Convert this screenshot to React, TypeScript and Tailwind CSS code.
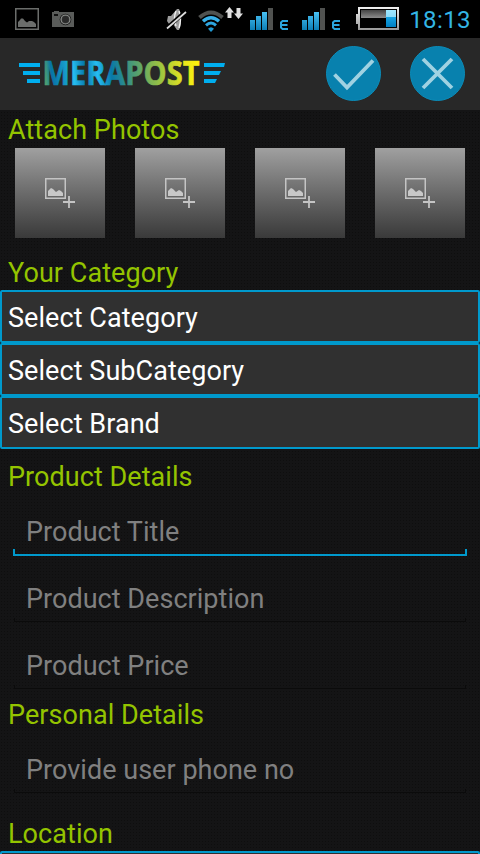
import type { ReactNode } from "react";

interface FieldProps {
  placeholder: string;
  focused?: boolean;
}

function PictureIcon() {
  return (
    <svg className="absolute left-[15px] top-2" width="24" height="22" viewBox="0 0 24 22">
      <rect x="0.75" y="0.75" width="22.5" height="20.5" fill="none" stroke="#6b6d6b" strokeWidth="1.5" />
      <path d="M3 19v-5l2-2 1-1.5h2L10 13l2 1.500 2-1.500h3l2 1 2 2V19z" fill="#6b6d6b" />
    </svg>
  );
}

function CameraIcon() {
  return (
    <svg className="absolute left-[52px] top-[11px]" width="22" height="16" viewBox="0 0 22 16">
      <path d="M0 1h2V0h5v1h15v15H0z" fill="#5a5c5a" />
      <rect x="2" y="3" width="4" height="2" fill="#111" />
      <circle cx="13.500" cy="8.500" r="5.800" fill="#111" />
      <circle cx="13.500" cy="8.500" r="4.500" fill="#4a4c4a" stroke="#909290" strokeWidth="1.200" />
      <circle cx="13.500" cy="8.500" r="3.400" fill="#2a2a2a" />
    </svg>
  );
}

function MuteIcon() {
  return (
    <svg className="absolute left-[166px] top-[9px]" width="21" height="22" viewBox="0 0 21 22">
      <path d="M2 7h3l6-7h2l1.500 4v13L13 21h-2l-4-6H3L1 12z" fill="#9c9c9c" />
      <path d="M10 2q-3 7 0 15M13 2q3 8 0 17" fill="none" stroke="#f0f0f0" strokeWidth="1.400" />
      <path d="M0 20L20 2" stroke="#000" strokeWidth="4" />
      <path d="M1 19.500L20 3" stroke="#ddd" strokeWidth="1.700" />
    </svg>
  );
}

function WifiIcon() {
  return (
    <svg className="absolute left-[197px] top-[7px]" width="47" height="25" viewBox="0 0 47 25">
      <g fill="none" strokeWidth="3">
        <path d="M2.500 10.500Q14 .500 25.500 10.500" stroke="#505250" strokeWidth="4" />
        <path d="M6 14.200Q14 7.200 22 14.200" stroke="#38b0e8" strokeWidth="3.500" />
        <path d="M9 18.300Q14 13.800 19 18.300" stroke="#2da5df" />
        <path d="M11 21.800q3-3 6 0L14 25z" fill="#2099d3" stroke="none" />
      </g>
      <path d="M32.500 0L37 5.500h-2.500V11h-4V5.500H28zM39.500 1h4v5.500H46L41.500 12 37 6.500h2.500z" fill="#e0e0e0" />
    </svg>
  );
}

function SignalIcon({ className }: { className: string }) {
  return (
    <svg className={className} width="40" height="22" viewBox="0 0 40 22">
      <defs>
        <linearGradient id="signal" gradientUnits="userSpaceOnUse" x1="0" y1="3" x2="0" y2="22">
          <stop stopColor="#4bc4f7" />
          <stop offset="1" stopColor="#0d7eb5" />
        </linearGradient>
      </defs>
      <path d="M0 12h5v10H0zM6 8h5v14H6zM12 4h5v18h-5z" fill="url(#signal)" />
      <path d="M18 0h5v22h-5z" fill="#505250" />
      <path d="M38 13h-5.500l-1.500 1.500v5l1.500 1.500H38M31 17h6.500" fill="none" stroke="#2ba6de" strokeWidth="2" />
    </svg>
  );
}

function BatteryIcon() {
  return (
    <svg className="absolute left-[356px] top-[7px]" width="43" height="23" viewBox="0 0 43 23">
      <defs>
        <linearGradient id="shell" x2="0" y2="1">
          <stop stopColor="#f0f0f0" />
          <stop offset="1" stopColor="#999" />
        </linearGradient>
        <linearGradient id="charge" x2="0" y2="1">
          <stop offset="0" stopColor="#a0e8ff" />
          <stop offset=".43" stopColor="#8bdcfa" />
          <stop offset=".44" stopColor="#16a3e3" />
          <stop offset="1" stopColor="#007fc1" />
        </linearGradient>
        <linearGradient id="empty" x2="0" y2="1">
          <stop stopColor="#444" />
          <stop offset="1" stopColor="#8c8c8c" />
        </linearGradient>
      </defs>
      <path d="M2 0h41v23H2v-6H0V7h2z" fill="url(#shell)" />
      <path d="M4 2h37v19H4z" fill="#000" />
      <path d="M5 3h25v8H5z" fill="url(#empty)" />
      <path d="M30 3h10v17H30z" fill="url(#charge)" />
    </svg>
  );
}

function StatusBar() {
  return (
    <div className="relative h-[38px] bg-black">
      <PictureIcon />
      <CameraIcon />
      <MuteIcon />
      <WifiIcon />
      <SignalIcon className="absolute left-[250px] top-2" />
      <SignalIcon className="absolute left-[302px] top-2" />
      <BatteryIcon />
      <span className="absolute right-[9px] top-1 text-[24px] leading-8 tracking-[0.4px] text-[#33b5e5]">18:13</span>
    </div>
  );
}

function Logo() {
  return (
    <svg className="ml-[19px]" width="207" height="60" viewBox="0 -12 207 60">
      <defs>
        <linearGradient id="logo" gradientUnits="userSpaceOnUse" x1="24" y1="26" x2="180" y2="10">
          <stop stopColor="#6bb35a" />
          <stop offset=".06" stopColor="#0874a6" />
          <stop offset=".15" stopColor="#169bc9" />
          <stop offset=".2" stopColor="#26bdf0" />
          <stop offset=".27" stopColor="#0879ac" />
          <stop offset=".35" stopColor="#26bdf0" />
          <stop offset=".44" stopColor="#0879a8" />
          <stop offset=".6" stopColor="#55a06e" />
          <stop offset=".76" stopColor="#a0c63e" />
          <stop offset=".9" stopColor="#e8e51e" />
          <stop offset="1" stopColor="#fff20a" />
        </linearGradient>
      </defs>
      <path
        d="M0 7h21v4H0zM4 15h17v4H4zM8 23h13v4H8zM185 7h21l-1 4h-20zM185 15h17l-2 4h-15zM185 23h13l-2 4h-11z"
        fill="#00aeef"
      />
      <text
        x="23.500"
        y="29"
        textLength="157"
        lengthAdjust="spacingAndGlyphs"
        className="font-['Open_Sans',sans-serif] text-[34px] font-bold"
        fill="url(#logo)"
        stroke="url(#logo)"
        strokeWidth="0.700"
      >
        MERAPOST
      </text>
    </svg>
  );
}

function RoundButton({ label, children }: { label: string; children: ReactNode }) {
  return (
    <button aria-label={label} className="size-[55px]">
      <svg width="55" height="55" viewBox="0 0 55 55" fill="none">
        <circle cx="27.500" cy="27.500" r="27" fill="#0881ae" stroke="#0b8dba" />
        {children}
      </svg>
    </button>
  );
}

function Header() {
  return (
    <header className="flex h-[72px] items-center bg-[#282828]">
      <Logo />
      <div className="ml-auto mr-[15px] flex gap-[29px] pb-[2px]">
        <RoundButton label="Save">
          <path d="M8.500 28.500L21 41.500 47 14.500" stroke="#a0d2e2" strokeWidth="3.800" />
        </RoundButton>
        <RoundButton label="Cancel">
          <path d="M13 13l29 29M42 13L13 42" stroke="#a0d2e2" strokeWidth="3.800" />
        </RoundButton>
      </div>
    </header>
  );
}

function Heading({ children }: { children: ReactNode }) {
  return (
    <h2 className="h-[35px] pl-2 text-[27px] leading-[37px] tracking-[0.06px] text-[#94c400]">{children}</h2>
  );
}

function PhotoTile() {
  return (
    <button aria-label="Add photo" className="size-[90px] bg-linear-to-b from-[#a0a0a0] to-[#3a3a3a]">
      <svg width="90" height="90" viewBox="0 0 90 90">
        <path d="M30.750 30.750h19.500v19.500h-19.500z" fill="none" stroke="#c4c4c4" strokeWidth="1.500" />
        <path d="M33 48v-5l1-1 2-2 2 1 3 3 3-2 2 1 2 2v3z" fill="#c8c8c8" />
        <path d="M48 54h12M54 48v12" stroke="#c4c4c4" strokeWidth="1.800" />
      </svg>
    </button>
  );
}

function SelectRow({ children }: { children?: ReactNode }) {
  return (
    <button className="block h-[53px] w-full rounded-[2px] border-2 border-[#0099cc] bg-[#303030] pl-[6px] text-left text-[27px] leading-[53px] tracking-[0.06px] text-white">
      <span className="block h-[49px]">{children}</span>
    </button>
  );
}

function Field({ placeholder, focused }: FieldProps) {
  return (
    <div className="mx-[13px] flex h-[50px] flex-col justify-between">
      <div className="h-[43px] pl-[13px] pt-[7px] text-[27px] leading-[39px] tracking-[0.03px] text-[#808080]">
        {placeholder}
      </div>
      {focused ? (
        <div className="h-[7px] border-x-2 border-b-2 border-[#0099cc]" />
      ) : (
        <div className="mx-px mb-px h-1 border-x border-b border-[#0b0b0b]" />
      )}
    </div>
  );
}

export default function App() {
  return (
    <div className="h-[854px] w-[480px] overflow-hidden bg-[#141415] bg-[radial-gradient(#0e0e0e_0.8px,transparent_1px)] bg-size-[3px_3px] font-[Roboto,sans-serif]">
      <StatusBar />
      <Header />
      <main className="pt-[2px]">
        <Heading>Attach Photos</Heading>
        <div className="mt-px flex gap-[30px] px-[15px]">
          <PhotoTile />
          <PhotoTile />
          <PhotoTile />
          <PhotoTile />
        </div>

        <div className="pt-[17px]">
          <Heading>Your Category</Heading>
          <SelectRow>Select Category</SelectRow>
          <SelectRow>Select SubCategory</SelectRow>
          <SelectRow>Select Brand</SelectRow>
        </div>

        <div className="pt-[10px]">
          <Heading>Product Details</Heading>
          <div className="mt-3 flex flex-col gap-[17px]">
            <Field placeholder="Product Title" focused />
            <Field placeholder="Product Description" />
            <Field placeholder="Product Price" />
          </div>
        </div>

        <div className="pt-[7px]">
          <Heading>Personal Details</Heading>
          <div className="mt-3">
            <Field placeholder="Provide user phone no" />
          </div>
        </div>

        <div className="pt-[22px]">
          <Heading>Location</Heading>
          <SelectRow />
        </div>
      </main>
    </div>
  );
}
